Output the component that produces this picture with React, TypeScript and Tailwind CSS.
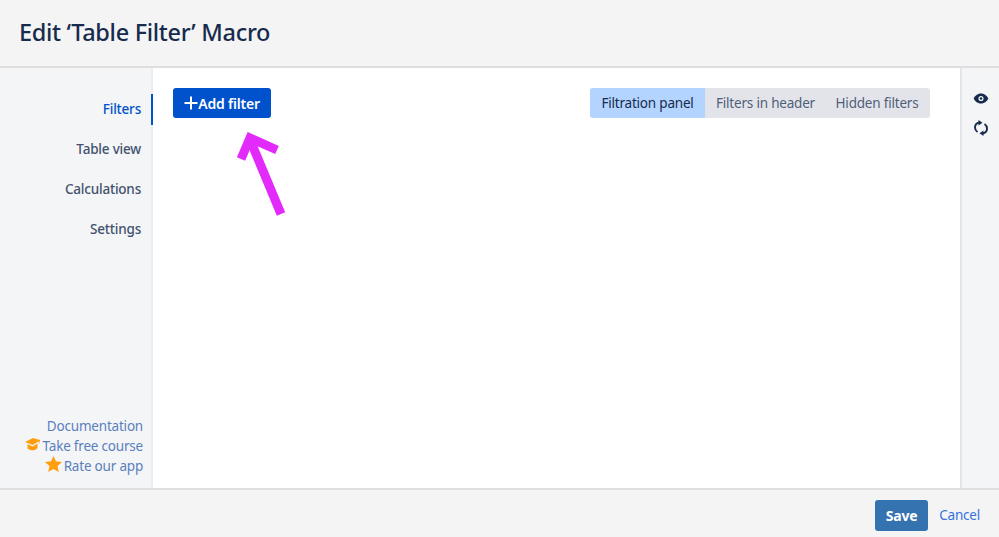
import React from "react";

const font = "font-['Noto_Sans','Open_Sans',sans-serif]";

function NavItem({ label, active }: { label: string; active?: boolean }) {
  return (
    <div
      className={`h-[31px] mb-[9px] flex items-center justify-end pr-[10px] border-r-2 text-[13.5px] tracking-[-0.2px] font-medium ${
        active ? "border-[#0052cc] text-[#0052cc]" : "border-transparent text-[#42526e]"
      }`}
    >
      {label}
    </div>
  );
}

export default function App() {
  return (
    <div className={`${font} w-[999px] h-[537px] flex flex-col bg-white overflow-hidden relative`}>
      <header className="h-[68px] shrink-0 bg-[#f4f4f4] border-b-2 border-[#dfdfdf] flex items-center pl-[19px] pb-[1px]">
        <h1 className="text-[23.5px] font-medium text-[#172b4d] leading-none tracking-[-0.3px]">Edit ‘Table Filter’ Macro</h1>
      </header>

      <div className="flex-1 flex min-h-0">
        <aside className="w-[153px] shrink-0 bg-[#f4f5f7] border-r-2 border-[#ebecf0] flex flex-col justify-between pt-[26px] pb-[12px]">
          <nav className="flex flex-col -mr-[2px]">
            <NavItem label="Filters" active />
            <NavItem label="Table view" />
            <NavItem label="Calculations" />
            <NavItem label="Settings" />
          </nav>
          <div className="flex flex-col items-end pr-[8px] text-[13.5px] tracking-[-0.2px] leading-[20px] text-[#5a7fbd]">
            <span>Documentation</span>
            <span className="flex items-center gap-[3px]">
              <svg width="15" height="13" viewBox="0 0 15 13" fill="#ff9f0f" className="-mt-[3px]">
                <path d="M0 4 L8 0 L15 2 L14 6 L13.5 3.5 L7.5 7 Z" />
                <path d="M2.5 6 L7.5 8.5 L12.5 5.5 V10 C10.5 13 5 13 2.5 10.5 Z" />
              </svg>
              Take free course
            </span>
            <span className="flex items-center gap-[2px]">
              <svg width="17" height="16" viewBox="0 0 16 15" fill="#ff9f0f" className="-mt-[4px]">
                <path d="M8 0 L10.3 5 L16 5.6 L11.8 9.3 L13 15 L8 12.1 L3 15 L4.2 9.3 L0 5.6 L5.7 5 Z" />
              </svg>
              Rate our app
            </span>
          </div>
        </aside>

        <main className="flex-1 flex justify-between items-start pt-[20px] pl-[20px] pr-[30px]">
          <button className="h-[30px] w-[98px] bg-[#0052cc] rounded-[3px] text-white text-[14px] tracking-[-0.2px] font-semibold flex items-center justify-center gap-0">
            <svg width="14" height="14" viewBox="0 0 14 14" stroke="white" strokeWidth="2">
              <path d="M7 0.5 V13.5 M0.5 7 H13.5" />
            </svg>
            Add filter
          </button>
          <div className="flex h-[30px] rounded-[3px] overflow-hidden bg-[#e3e4ea] text-[13.5px] tracking-[-0.2px] text-[#505f79]">
            <div className="w-[115px] bg-[#b3d4ff] text-[#172b4d] flex items-center justify-center">Filtration panel</div>
            <div className="w-[121px] flex items-center justify-center">Filters in header</div>
            <div className="w-[104px] flex items-center justify-center pr-[2px]">Hidden filters</div>
          </div>
        </main>

        <aside className="w-[39px] shrink-0 bg-[#f4f5f7] border-l-2 border-[#e4e5e9] flex flex-col items-center pt-[25px] gap-[16px]">
          <svg width="16" height="11" viewBox="0 0 16 12">
            <path fillRule="evenodd" fill="#172b4d" d="M8 0.5 C12 0.5 15 3.5 16 6 C15 8.5 12 11.5 8 11.5 C4 11.5 1 8.5 0 6 C1 3.5 4 0.5 8 0.5 Z M8 3.2 A2.8 2.8 0 1 0 8 8.8 A2.8 2.8 0 1 0 8 3.2 Z" />
            <circle cx="8" cy="6" r="1.4" fill="#172b4d" />
          </svg>
          <svg width="14" height="16" viewBox="0 0 14 16" fill="none" stroke="#172b4d" strokeWidth="1.9">
            <path d="M5.5 2.5 C2.5 3 1 5 1 7.5 C1 9.5 2 11 3.5 12" />
            <path d="M8.5 13.5 C11.5 13 13 11 13 8.5 C13 6.5 12 5 10.5 4" />
            <path fill="#172b4d" stroke="none" d="M4.5 0 L8.5 2.8 L4.5 5.5 Z M9.5 16 L5.5 13.2 L9.5 10.5 Z" />
          </svg>
        </aside>
      </div>

      <footer className="h-[49px] shrink-0 bg-[#f4f4f4] border-t-2 border-[#dfdfdf] flex items-center justify-end pr-[19px] gap-[11px]">
        <button className="w-[53px] h-[31px] bg-[#3572b0] rounded-[3px] text-white text-[14px] tracking-[-0.2px] font-bold mt-[4px]">Save</button>
        <span className="text-[13.5px] tracking-[-0.2px] text-[#3572e0] mt-[4px]">Cancel</span>
      </footer>

      <svg className="absolute left-[230px] top-[125px] pointer-events-none" width="60" height="95" viewBox="0 0 60 95" fill="none" stroke="#e22bfb" strokeWidth="9">
        <path d="M51 89 L21 17" />
        <path d="M11 34 L20 13 L47 25" />
      </svg>
    </div>
  );
}
